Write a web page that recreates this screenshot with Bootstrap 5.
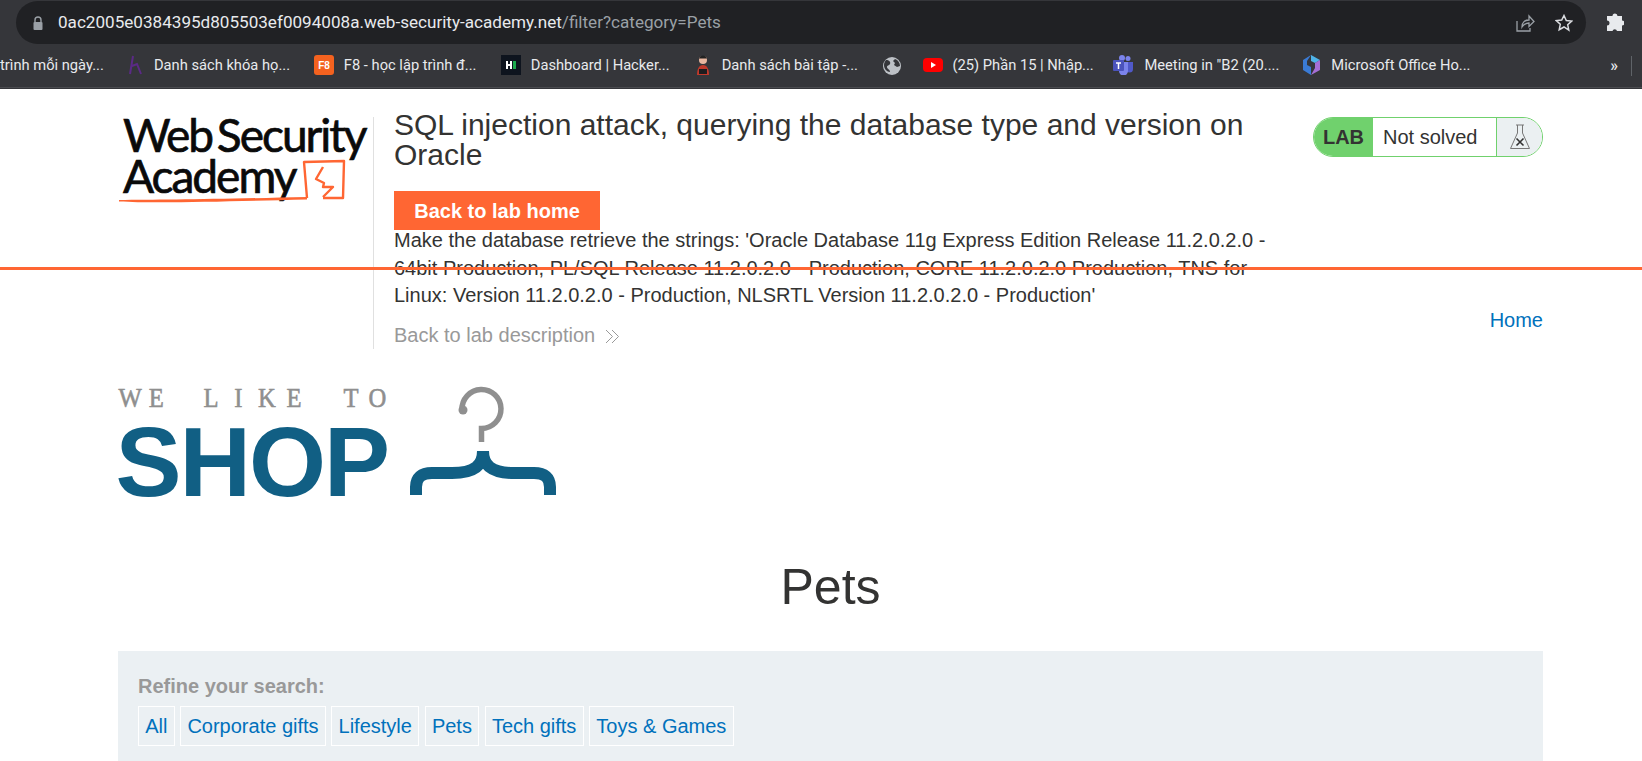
<!doctype html>
<html lang="en">
<head>
    <meta charset="utf-8">
    <meta name="viewport" content="width=device-width, initial-scale=1">
    <title>Pets - We Like To Shop</title>
    <link href="https://cdn.jsdelivr.net/npm/bootstrap@5.3.3/dist/css/bootstrap.min.css" rel="stylesheet">
    <style>
        html, body {
            height: 761px;
            overflow: hidden;
        }

        body {
            font-family: "Liberation Sans", Arial, sans-serif;
            color: #333332;
            background-color: #fff;
            position: relative;
        }

        /* browser chrome */
        .browser-top {
            height: 89px;
            background-color: #35363a;
            font-family: Roboto, "Noto Sans", sans-serif;
            color: #e8eaed;
        }

        .address-row {
            height: 44px;
            padding-top: 1px;
        }

        .address-bar {
            margin-left: 16px;
            width: 1570px;
            height: 43px;
            background-color: #202124;
            border-radius: 22px;
            font-size: 17.100px;
            padding-left: 42px;
            padding-right: 13px;
        }

        .address-bar .url-rest {
            color: #9aa0a6;
        }

        .addr-right {
            margin-left: auto;
            gap: 20px;
        }

        .puzzle-slot {
            margin-left: 20px;
            padding-top: 12px;
        }

        .bookmark-row {
            height: 44px;
            font-size: 14.700px;
            border-bottom: 1px solid #4a4b4f;
            white-space: nowrap;
        }

        .bm-first { width: 128px; }
        .bm-item { gap: 10px; }
        .bm-w1 { width: 186px; }
        .bm-w2 { width: 187px; }
        .bm-w3 { width: 193px; }
        .bm-w4 { width: 189px; }
        .bm-w5 { width: 40px; }
        .bm-w6 { width: 191px; }
        .bm-w7 { width: 189px; }
        .bm-w8 { width: 308px; }

        .bm-more {
            margin-right: 10px;
            padding-right: 13px;
            border-right: 1px solid #5f6368;
            font-size: 16px;
            font-weight: 500;
            line-height: 20px;
        }

        /* lab header */
        .lab-header {
            padding: 21px 99px 0 118px;
        }

        .lab-logo {
            flex: 0 0 255px;
        }

        .lab-main {
            margin-top: 7px;
            width: 903px;
            padding-left: 20px;
            border-left: 1px solid #e0e0e0;
            height: 232px;
        }

        .lab-title {
            margin: -7px 0 21px;
            font-size: 30px;
            line-height: 30px;
            font-weight: 400;
            color: #333332;
        }

        .btn-lab {
            display: block;
            width: 206px;
            height: 39px;
            border-radius: 0;
            border: 0;
            padding: 1px 0 0;
            line-height: 39px;
            background-color: #ff6633;
            color: #fff;
            font-weight: 700;
            font-size: 20px;
        }

        .lab-desc {
            margin: -3px 0 0;
            font-size: 20px;
            line-height: 27.500px;
        }

        .back-desc {
            display: block;
            margin-top: 11px;
            font-size: 20px;
            line-height: 28px;
            color: #999;
            text-decoration: none;
        }

        .lab-side {
            margin-left: auto;
            width: 230px;
        }

        .lab-status {
            margin-top: 7px;
            height: 40px;
            border: 1px solid #70d16d;
            border-radius: 20px;
            overflow: hidden;
            font-size: 20px;
        }

        .status-tag {
            width: 59px;
            background-color: #70d16d;
            font-weight: 700;
        }

        .status-text {
            width: 124px;
            padding-left: 10px;
            border-right: 1px solid #70d16d;
        }

        .status-flask {
            flex: 1;
            background-color: #ebf0f2;
        }

        .home-link {
            margin-top: 149px;
            color: #0071bc;
            font-size: 20px;
            text-decoration: none;
            line-height: 28px;
        }

        .orange-rule {
            position: absolute;
            left: 0;
            right: 0;
            top: 267px;
            height: 3px;
            background-color: #ff6633;
        }

        /* shop */
        .shop-wrap {
            padding: 36px 99px 0 118px;
        }

        .shop-heading {
            margin: 60px 0 36px;
            font-size: 50px;
            line-height: 56px;
            font-weight: 400;
            color: #333332;
            text-align: center;
        }

        .filter-panel {
            height: 110px;
            padding: 23px 20px 0;
            background-color: #ebf0f3;
        }

        .filter-label {
            font-size: 20px;
            line-height: 24px;
            font-weight: 700;
            color: #999;
            margin-bottom: 8px;
        }

        .filter-link {
            display: block;
            height: 40px;
            padding: 0 6.200px;
            border: 1px solid #fff;
            color: #0071bc;
            font-size: 20px;
            line-height: 38px;
            text-decoration: none;
        }

        .filter-list {
            gap: 5.600px;
        }
    </style>
</head>
<body>
    <!-- browser toolbar -->
    <div class="browser-top">
        <div class="address-row d-flex align-items-start">
            <div class="address-bar d-flex align-items-center position-relative">
                <svg class="position-absolute start-0 ms-3" width="12" height="14" viewBox="0 0 12 14"><path d="M3 6V4a3 3 0 0 1 6 0v2" fill="none" stroke="#9aa0a6" stroke-width="1.4"/><rect x="1.5" y="6" width="9" height="8" rx="1" fill="#9aa0a6"/></svg>
                <span>0ac2005e0384395d805503ef0094008a.web-security-academy.net<span class="url-rest">/filter?category=Pets</span></span>
                <div class="addr-right d-flex align-items-center">
                    <svg width="19" height="18" viewBox="0 0 19 18" fill="none" stroke="#9aa0a6" stroke-width="1.3"><path d="M1 7v10h13v-3"/><path d="M6 13c0-5 3-7 7-7V2l5 5.500-5 5V9c-3 0-5 1-7 4z"/></svg>
                    <svg width="18" height="18" viewBox="0 0 18 18" fill="none" stroke="#dadce0" stroke-width="1.5"><path d="M9 1.500l2.300 5 5.400.6-4 3.700 1.100 5.400L9 13l-4.800 2.700 1.100-5.400-4-3.700 5.400-.6z"/></svg>
                </div>
            </div>
            <div class="puzzle-slot d-flex">
                <svg width="18" height="18" viewBox="0 0 18 18" fill="#e8eaed"><path d="M6.500 3a2.500 2.500 0 0 1 5 0h4.500v4.500a2.500 2.500 0 0 1 0 5V18h-5a2.300 2.300 0 0 0-4.500 0H1v-5.500a2.500 2.500 0 0 0 0-5V3z"/></svg>
            </div>
        </div>
        <div class="bookmark-row d-flex align-items-center overflow-hidden">
            <div class="bm-first">trình mỗi ngày...</div>
            <div class="bm-item bm-w1 d-flex align-items-center">
                <svg width="16" height="20" viewBox="0 0 16 20" fill="none" stroke="#5b2a86" stroke-width="2"><path d="M5 1l-3 18M4 11l5-2 4 10"/></svg>
                <span>Danh sách khóa họ...</span>
            </div>
            <div class="bm-item bm-w2 d-flex align-items-center">
                <svg width="20" height="20" viewBox="0 0 20 20"><rect width="20" height="20" rx="3" fill="#f4621f"/><text x="10" y="14" font-size="10" font-weight="700" fill="#fff" text-anchor="middle" font-family="Liberation Sans">F8</text></svg>
                <span>F8 - học lập trình đ...</span>
            </div>
            <div class="bm-item bm-w3 d-flex align-items-center">
                <svg width="20" height="20" viewBox="0 0 20 20"><rect width="20" height="20" fill="#0e141e"/><rect x="5" y="6" width="2" height="8" fill="#fff"/><rect x="9" y="6" width="2" height="8" fill="#fff"/><rect x="7" y="9" width="2" height="2" fill="#fff"/><rect x="12" y="6" width="3" height="8" fill="#1ba94c"/></svg>
                <span>Dashboard | Hacker...</span>
            </div>
            <div class="bm-item bm-w4 d-flex align-items-center">
                <svg width="18" height="20" viewBox="0 0 18 20"><circle cx="9" cy="5" r="4" fill="#e9b7a0"/><path d="M9 0.500a4.500 4.500 0 0 0-4 3h8a4.500 4.500 0 0 0-4-3z" fill="#222"/><path d="M3 20c0-6 2-10 6-10s6 4 6 10z" fill="#c0392b"/><rect x="5" y="14" width="8" height="5" fill="#1d1d1f"/></svg>
                <span>Danh sách bài tập -...</span>
            </div>
            <div class="bm-w5 d-flex align-items-center">
                <svg width="18" height="18" viewBox="0 0 18 18"><circle cx="9" cy="9" r="9" fill="#bdc1c6"/><path d="M3 3c3 0 5 2 4 4s-3 1-3 3 3 2 3 5c-3 0-6-3-6-7 0-2 1-4 2-5zM12 2c3 1 5 4 5 7l-3 1-3-2 1-2-2-2z" fill="#35363a"/></svg>
            </div>
            <div class="bm-item bm-w6 d-flex align-items-center">
                <svg width="20" height="20" viewBox="0 0 20 20"><rect y="3" width="20" height="14" rx="4" fill="#f00"/><path d="M8 7l5 3-5 3z" fill="#fff"/></svg>
                <span>(25) Phần 15 | Nhập...</span>
            </div>
            <div class="bm-item bm-w7 d-flex align-items-center">
                <svg width="21" height="20" viewBox="0 0 21 20"><circle cx="15" cy="3.500" r="2.500" fill="#7b83eb"/><circle cx="9" cy="3" r="3" fill="#7b83eb"/><path d="M13 7h7v7a3.500 3.500 0 0 1-7 0z" fill="#5059c9"/><path d="M6 7h9v9a4.500 4.500 0 0 1-9 0z" fill="#7b83eb"/><rect y="5" width="11" height="11" rx="1" fill="#4b53bc"/><path d="M3 8h5M5.500 8v6" stroke="#fff" stroke-width="1.500"/></svg>
                <span>Meeting in "B2 (20....</span>
            </div>
            <div class="bm-item bm-w8 d-flex align-items-center">
                <svg width="19" height="20" viewBox="0 0 19 20"><path d="M9 0L1 5v10l8 5V12L5 10V6z" fill="#3a7bd5"/><path d="M9 0l9 5-5 3-4-2z" fill="#4fb3e8"/><path d="M18 5v10l-9 5 4-7V8z" fill="#a56fd6"/></svg>
                <span>Microsoft Office Ho...</span>
            </div>
            <div class="bm-more">»</div>
        </div>
    </div>

    <!-- lab banner -->
    <div class="lab-header d-flex align-items-start">
        <div class="lab-logo">
            <svg class="d-block overflow-visible" width="255" height="98" viewBox="118 110 255 98">
                <g font-family="Lato, sans-serif" font-size="46" fill="#0a0a0a" stroke="#0a0a0a" stroke-width=".7" letter-spacing="-2" word-spacing="-5">
                    <text x="123" y="152">Web Security</text>
                    <text x="123" y="193">Academy</text>
                </g>
                <path d="M119 200c40 0 100-1 188-3v2.500c-80 2-150 4-188 2z" fill="#ff6633"/>
                <g fill="none" stroke="#ff6633" stroke-width="2.400" stroke-linejoin="round">
                    <path d="M307 198l-3-36 40-1-1 37-20 0"/>
                    <path d="M323 167l-7 12 8 4-1 4h10l-10 10"/>
                </g>
            </svg>
        </div>
        <div class="lab-main">
            <h2 class="lab-title">SQL injection attack, querying the database type and version on Oracle</h2>
            <a class="btn btn-lab" href="#">Back to lab home</a>
            <p class="lab-desc">Make the database retrieve the strings: 'Oracle Database 11g Express Edition Release 11.2.0.2.0 - 64bit Production, PL/SQL Release 11.2.0.2.0 - Production, CORE 11.2.0.2.0 Production, TNS for Linux: Version 11.2.0.2.0 - Production, NLSRTL Version 11.2.0.2.0 - Production'</p>
            <a class="back-desc" href="#">Back to lab description
                <svg class="ms-1" width="15" height="15" viewBox="0 0 15 15" fill="none" stroke="#999" stroke-width="1"><path d="M1 1l6.500 6.500L1 14M7 1l6.500 6.500L7 14"/></svg>
            </a>
        </div>
        <div class="lab-side d-flex flex-column align-items-end">
            <div class="lab-status d-flex align-items-stretch w-100">
                <div class="status-tag d-flex align-items-center justify-content-center">LAB</div>
                <div class="status-text d-flex align-items-center">Not solved</div>
                <div class="status-flask d-flex align-items-center justify-content-center">
                    <svg width="22" height="26" viewBox="0 0 22 26" fill="none" stroke="#777" stroke-width="1"><path d="M7 1h8M8.500 1v8L1.500 24.500h19L13.500 9V1"/><path d="M7.500 14.500l7 7M14.500 14.500l-7 7" stroke="#333" stroke-width="1.600"/></svg>
                </div>
            </div>
            <a class="home-link" href="#">Home</a>
        </div>
    </div>
    <div class="orange-rule"></div>

    <!-- shop -->
    <div class="shop-wrap">
        <svg class="d-block overflow-visible" width="440" height="114" viewBox="118 385 440 114">
            <g transform="translate(0 407) scale(.88 1)">
                <text y="0" x="148 177.500 208 239.800 271 303.400 334 366.500 398.900 429" text-anchor="middle" font-family="Liberation Serif, serif" font-size="28" fill="#8f8f8f" stroke="#8f8f8f" stroke-width=".6">WE LIKE TO</text>
            </g>
            <text x="115.500" y="495.500" font-family="Liberation Sans, sans-serif" font-weight="700" font-size="99" letter-spacing="-2" fill="#115f84">SHOP</text>
            <path d="M462 410A19.500 19.500 0 1 1 481.500 428.500V442" fill="none" stroke="#8f8f8f" stroke-width="5.500"/>
            <circle cx="463" cy="410" r="4.500" fill="#8f8f8f"/>
            <path d="M416 495v-8q0-14 16-14h20c23 0 31-8 31-22M550 495v-8q0-14-16-14h-20c-23 0-31-8-31-22" fill="none" stroke="#115f84" stroke-width="12"/>
        </svg>
        <h1 class="shop-heading">Pets</h1>
        <div class="filter-panel">
            <div class="filter-label">Refine your search:</div>
            <div class="filter-list d-flex">
                <a class="filter-link" href="#">All</a>
                <a class="filter-link" href="#">Corporate gifts</a>
                <a class="filter-link" href="#">Lifestyle</a>
                <a class="filter-link" href="#">Pets</a>
                <a class="filter-link" href="#">Tech gifts</a>
                <a class="filter-link" href="#">Toys &amp; Games</a>
            </div>
        </div>
    </div>
    <script src="https://cdn.jsdelivr.net/npm/bootstrap@5.3.3/dist/js/bootstrap.bundle.min.js"></script>
</body>
</html>
